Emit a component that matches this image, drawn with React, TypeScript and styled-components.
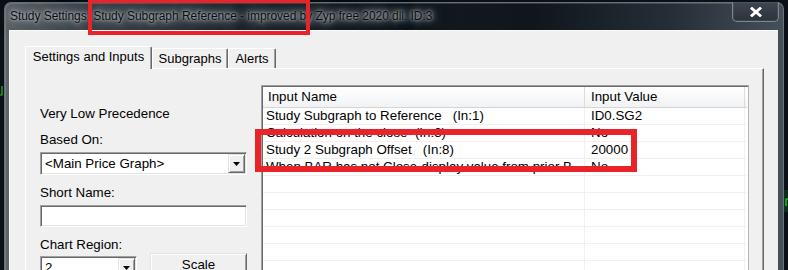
import React from "react";
import styled, { createGlobalStyle } from "styled-components";

const GlobalStyle = createGlobalStyle`
  html, body { margin: 0; padding: 0; background: #0b1016; }
  body { width: 788px; height: 270px; overflow: hidden; font-family: "Liberation Sans", Arial, sans-serif; }
  #root { width: 788px; height: 270px; }
`;

const Desktop = styled.div`
  position: relative;
  width: 788px;
  height: 270px;
  overflow: hidden;
  background: #0b1016;
  padding: 2px 0 0 4px;
  box-sizing: border-box;
`;

const ChartLayer = styled.svg`
  position: absolute;
  left: 0;
  top: 0;
  width: 788px;
  height: 270px;
  pointer-events: none;
`;

const Window = styled.div`
  position: relative;
  width: 780px;
  height: 300px;
  box-sizing: border-box;
  display: flex;
  flex-direction: column;
  border: 1px solid #6a7178;
  border-bottom: none;
  border-radius: 7px 7px 0 0;
  background: linear-gradient(
    90deg,
    #5d646b 0%,
    #3f464d 10%,
    #232a31 30%,
    #12191f 50%,
    #0f161c 68%,
    #262f38 86%,
    #46505a 100%
  );
  box-shadow: inset 1px 1px 0 rgba(255, 255, 255, 0.15);
`;

const TitleBar = styled.div`
  height: 27px;
  display: flex;
  align-items: flex-start;
  padding-left: 5px;
  flex-shrink: 0;
`;

const Title = styled.span`
  margin-top: 6px;
  font-family: "Liberation Sans", Arial, sans-serif;
  font-size: 12px;
  line-height: 15px;
  letter-spacing: -0.05px;
  color: #0a0d10;
  white-space: nowrap;
  text-shadow: 0 0 3px rgba(200, 205, 210, 0.95), 0 0 6px rgba(170, 176, 182, 0.9),
    0 0 10px rgba(150, 156, 162, 0.9), 0 0 14px rgba(130, 136, 142, 0.8),
    0 0 18px rgba(120, 126, 132, 0.7);
`;

const CloseButton = styled.div`
  margin-left: auto;
  margin-top: -1px;
  margin-right: 4px;
  width: 47px;
  height: 20px;
  box-sizing: border-box;
  border: 1px solid #7d868f;
  border-top: none;
  border-radius: 0 0 5px 5px;
  background: linear-gradient(180deg, #3e4750 0%, #2b333b 100%);
  box-shadow: inset 0 0 0 1px rgba(255, 255, 255, 0.08);
  display: flex;
  align-items: center;
  justify-content: center;
`;

const Client = styled.div`
  flex: 1;
  display: flex;
  flex-direction: column;
  margin: 0 5px 0 4px;
  background: #f0f0f0;
  border-top: 1px solid #fbfbfb;
  border-left: 1px solid #fbfbfb;
  padding: 15px 14px 0 15px;
  font-family: "Liberation Sans", Arial, sans-serif;
  color: #000;
`;

const TabStrip = styled.div`
  display: flex;
  align-items: flex-end;
  height: 22px;
`;

const Tab = styled.div<{ $active?: boolean; $w: number }>`
  position: relative;
  z-index: ${(p) => (p.$active ? 2 : 1)};
  width: ${(p) => p.$w}px;
  height: ${(p) => (p.$active ? 23 : 20)}px;
  margin-bottom: ${(p) => (p.$active ? -1 : 0)}px;
  box-sizing: border-box;
  background: #f0f0f0;
  border-top: 1px solid #ffffff;
  border-left: 1px solid #ffffff;
  border-right: 1px solid #696969;
  border-radius: 2px 2px 0 0;
  box-shadow: inset -1px 0 0 #a0a0a0;
  font-size: 13px;
  line-height: ${(p) => (p.$active ? 20 : 19)}px;
  text-align: center;
  white-space: nowrap;
`;

const TabPanel = styled.div`
  flex: 1;
  display: flex;
  gap: 14px;
  align-items: flex-start;
  border-top: 1px solid #ffffff;
  border-left: 1px solid #ffffff;
  border-right: 1px solid #696969;
  box-shadow: inset -1px 0 0 #a0a0a0;
  padding: 16px 14px 0 14px;
`;

const LeftColumn = styled.div`
  width: 207px;
  flex-shrink: 0;
  display: flex;
  flex-direction: column;
  padding-top: 21px;
`;

const Label = styled.div<{ $gap?: number }>`
  font-size: 13.33px;
  line-height: 16px;
  height: 16px;
  margin-bottom: ${(p) => p.$gap ?? 4}px;
  white-space: nowrap;
`;

const Combo = styled.div<{ $w?: number }>`
  position: relative;
  width: ${(p) => (p.$w ? `${p.$w}px` : "100%")};
  height: 23px;
  flex-shrink: 0;
  box-sizing: border-box;
  background: #ffffff;
  border-style: solid;
  border-width: 1px;
  border-color: #a0a0a0 #ffffff #ffffff #a0a0a0;
  box-shadow: inset 1px 1px 0 #696969, inset -1px -1px 0 #e3e3e3;
  display: flex;
  align-items: center;
  padding: 1px 1px 1px 4px;
  font-size: 13.33px;
  margin-bottom: 10px;
`;

const ComboText = styled.span`
  flex: 1;
  white-space: nowrap;
  overflow: hidden;
`;

const ArrowButton = styled.span`
  width: 17px;
  height: 19px;
  box-sizing: border-box;
  background: #f0f0f0;
  border-style: solid;
  border-width: 1px;
  border-color: #e3e3e3 #696969 #696969 #e3e3e3;
  box-shadow: inset 1px 1px 0 #ffffff, inset -1px -1px 0 #a0a0a0;
  display: flex;
  align-items: center;
  justify-content: center;
  padding-top: 1px;
`;

const TextBox = styled.div`
  width: 100%;
  height: 22px;
  box-sizing: border-box;
  background: #ffffff;
  border-style: solid;
  border-width: 1px;
  border-color: #a0a0a0 #ffffff #ffffff #a0a0a0;
  box-shadow: inset 1px 1px 0 #696969, inset -1px -1px 0 #e3e3e3;
  margin-bottom: 10px;
`;

const RegionRow = styled.div`
  display: flex;
  align-items: flex-start;
  gap: 13px;
`;

const RegionCombo = styled(Combo)`
  margin-top: 3px;
`;

const PushButton = styled.div`
  width: 97px;
  height: 24px;
  box-sizing: border-box;
  background: #f0f0f0;
  border-style: solid;
  border-width: 1px;
  border-color: #e3e3e3 #696969 #696969 #e3e3e3;
  box-shadow: inset 1px 1px 0 #ffffff, inset -1px -1px 0 #a0a0a0;
  font-size: 13.33px;
  line-height: 22px;
  text-align: center;
`;

const ListView = styled.div`
  flex: 1;
  height: 200px;
  box-sizing: border-box;
  background: #ffffff;
  border-style: solid;
  border-width: 1px;
  border-color: #a0a0a0 #b4b4b4 #ffffff #a0a0a0;
  box-shadow: inset 1px 1px 0 #696969;
  padding: 1px 0 0 1px;
  font-size: 13.33px;
`;

const GridRow = styled.div<{ $header?: boolean }>`
  display: grid;
  grid-template-columns: 322px 160px;
  height: ${(p) => (p.$header ? 21 : 17)}px;
  box-sizing: border-box;
  background: ${(p) => (p.$header ? "linear-gradient(180deg,#ffffff 0%,#f7f8f9 60%,#f1f2f4 100%)" : "#ffffff")};
  border-bottom: 1px solid ${(p) => (p.$header ? "#d5d5d5" : "#f0f0f0")};
  width: 484px;
`;

const Cell = styled.div<{ $header?: boolean; $first?: boolean }>`
  box-sizing: border-box;
  line-height: ${(p) => (p.$header ? 20 : 16)}px;
  padding-left: ${(p) => (p.$first ? (p.$header ? 5 : 3) : 6)}px;
  border-right: 1px solid ${(p) => (p.$header ? "#dcdcdc" : "#f0f0f0")};
  white-space: pre;
  overflow: hidden;
`;

const Highlight = styled.div<{ $x: number; $y: number; $w: number; $h: number; $b: number }>`
  position: absolute;
  left: ${(p) => p.$x}px;
  top: ${(p) => p.$y}px;
  width: ${(p) => p.$w}px;
  height: ${(p) => p.$h}px;
  box-sizing: border-box;
  border: ${(p) => p.$b}px solid #e8232a;
  z-index: 10;
  pointer-events: none;
`;

const rows: [string, string][] = [
  ["Study Subgraph to Reference   (In:1)", "ID0.SG2"],
  ["Calculation on the close  (In:3)", "No"],
  ["Study 2 Subgraph Offset   (In:8)", "20000"],
  ["When BAR has not Close-display value from prior B...", "No"],
  ["", ""],
  ["", ""],
  ["", ""],
  ["", ""],
  ["", ""],
  ["", ""],
];

const DownTriangle = () => (
  <svg width="7" height="4" viewBox="0 0 7 4">
    <path d="M0 0 H7 L3.5 4 Z" fill="#000" />
  </svg>
);

export default function App() {
  return (
    <>
      <GlobalStyle />
      <Desktop>
        <ChartLayer viewBox="0 0 788 270">
          <path d="M0 95 H2 V86" stroke="#22c22e" strokeWidth="1.2" fill="none" />
          <rect x="784" y="190" width="4" height="22" fill="#0f3a1c" opacity="0.7" />
          <path d="M786 206 V199 H788" stroke="#26d435" strokeWidth="1.2" fill="none" />
        </ChartLayer>
        <Window>
          <TitleBar>
            <Title>Study Settings: Study Subgraph Reference - improved by Zyp free 2020 dll. ID:3</Title>
            <CloseButton>
              <svg width="12" height="10" viewBox="0 0 12 10">
                <path d="M2 1.5 L10 8.5 M10 1.5 L2 8.5" stroke="#ffffff" strokeWidth="2.8" strokeLinecap="square" />
              </svg>
            </CloseButton>
          </TitleBar>
          <Client>
            <TabStrip>
              <Tab $active $w={127}>Settings and Inputs</Tab>
              <Tab $w={76}>Subgraphs</Tab>
              <Tab $w={48}>Alerts</Tab>
            </TabStrip>
            <TabPanel>
              <LeftColumn>
                <Label $gap={10}>Very Low Precedence</Label>
                <Label>Based On:</Label>
                <Combo>
                  <ComboText>&lt;Main Price Graph&gt;</ComboText>
                  <ArrowButton>
                    <DownTriangle />
                  </ArrowButton>
                </Combo>
                <Label>Short Name:</Label>
                <TextBox />
                <Label $gap={0}>Chart Region:</Label>
                <RegionRow>
                  <RegionCombo $w={97}>
                    <ComboText>2</ComboText>
                    <ArrowButton>
                      <DownTriangle />
                    </ArrowButton>
                  </RegionCombo>
                  <PushButton>Scale</PushButton>
                </RegionRow>
              </LeftColumn>
              <ListView>
                <GridRow $header>
                  <Cell $header $first>Input Name</Cell>
                  <Cell $header>Input Value</Cell>
                </GridRow>
                {rows.map(([name, value], i) => (
                  <GridRow key={i}>
                    <Cell $first>{name}</Cell>
                    <Cell>{value}</Cell>
                  </GridRow>
                ))}
              </ListView>
            </TabPanel>
          </Client>
        </Window>
        <Highlight $x={88} $y={-1} $w={222} $h={36} $b={4} />
        <Highlight $x={255} $y={129} $w={382} $h={43} $b={6} />
      </Desktop>
    </>
  );
}
